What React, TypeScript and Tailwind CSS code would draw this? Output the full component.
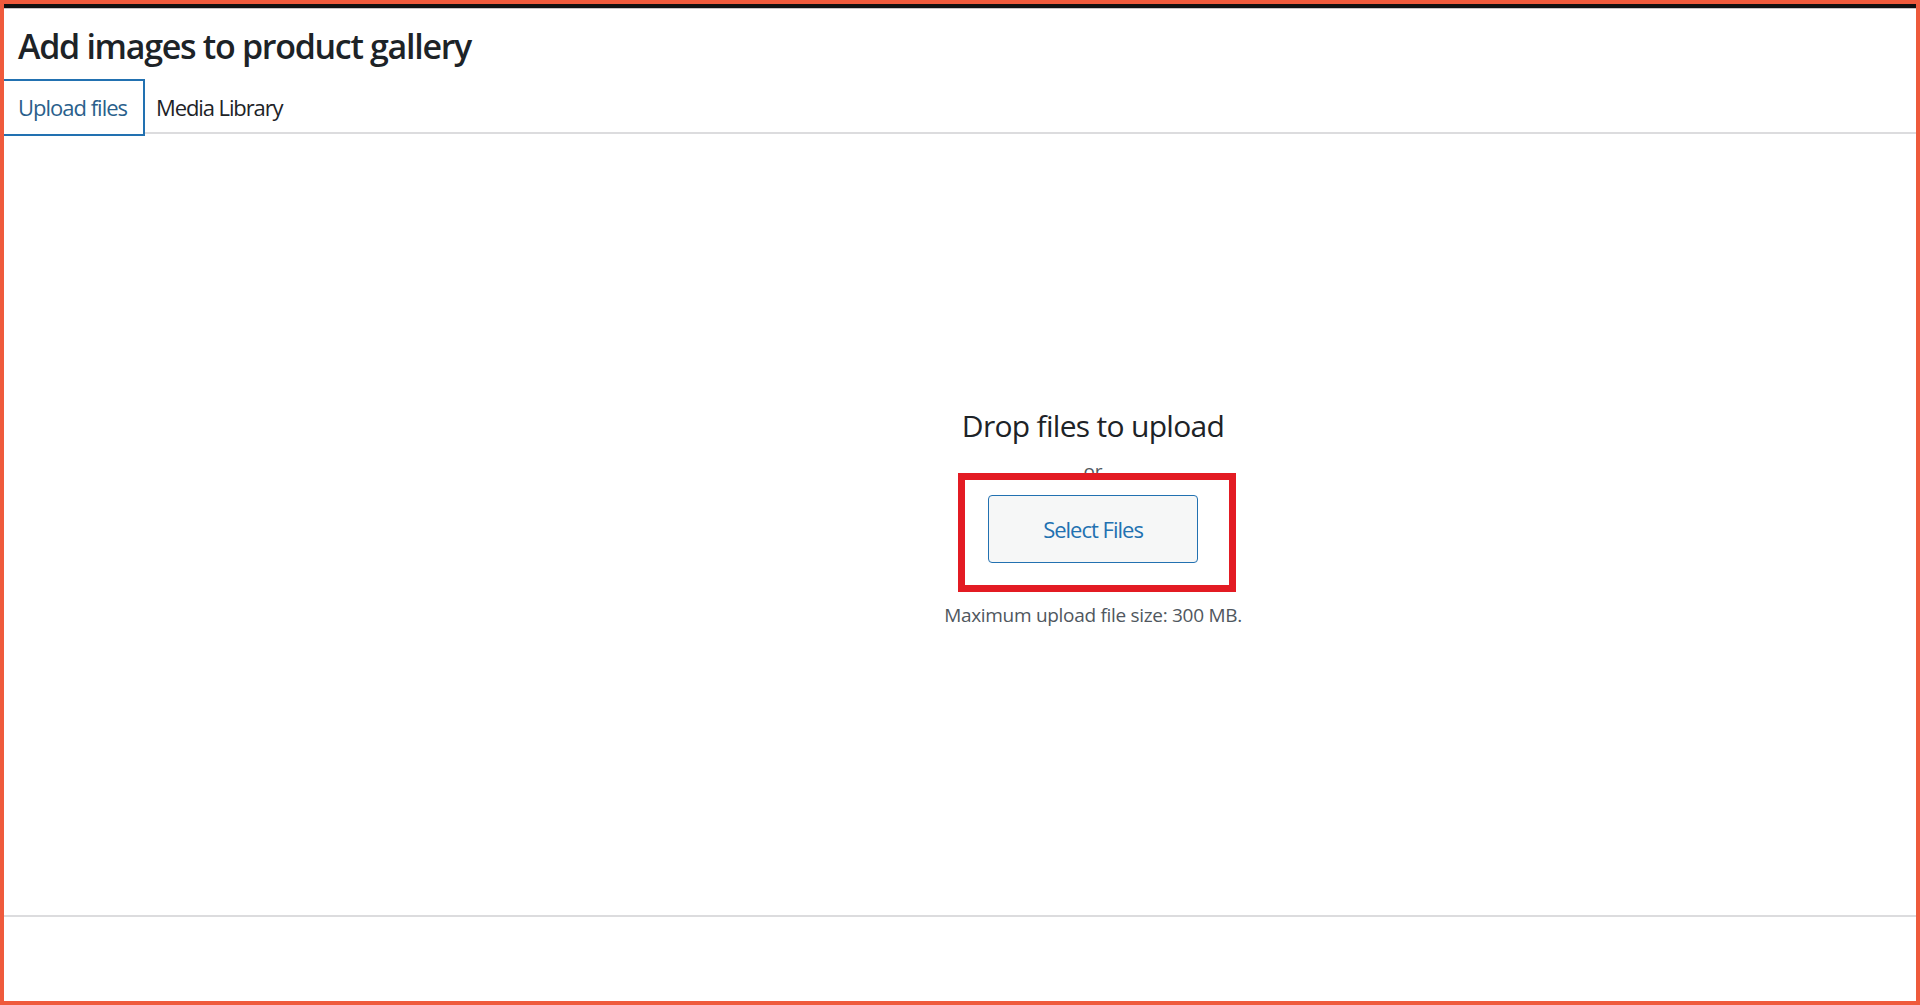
export default function App() {
  return (
    <div
      className="w-[1920px] h-[1005px] box-border border-4 border-[#ef5a3c] bg-white flex flex-col overflow-hidden"
      style={{ fontFamily: '"Open Sans", "Noto Sans", "Liberation Sans", sans-serif' }}
    >
      <div className="h-[4px] bg-[#111111] shrink-0" />
      <div className="h-px bg-[#c3c4c7] shrink-0" />
      <div className="h-[70px] shrink-0 pt-[15px] pl-[14px]">
        <h1 className="text-[34px] leading-[44px] font-semibold text-[#1d2327] tracking-[-1.3px]">
          Add images to product gallery
        </h1>
      </div>
      <div className="h-[55px] shrink-0 box-border border-b-2 border-[#dcdcde] flex items-start">
        <div className="-ml-[2px] w-[143px] h-[57px] box-border border-2 border-[#2271b1] bg-white flex items-center pl-[14px] text-[22px] text-[#2a5f8c] tracking-[-1px]">
          Upload files
        </div>
        <div className="mt-[2px] h-[53px] flex items-center pl-[11px] text-[22px] text-[#1d2327] tracking-[-1.1px]">
          Media Library
        </div>
      </div>
      <div className="flex-1 flex flex-col items-center pl-[266px] pt-[272px]">
        <div className="text-[30px] leading-[40px] text-[#1d2327] tracking-[-0.7px]">Drop files to upload</div>
        <div className="mt-[12px] text-[19px] leading-[26px] text-[#50575e]">or</div>
        <div className="relative mt-[11px]">
          <button className="w-[210px] h-[68px] box-border border border-[#2271b1] rounded-[4px] bg-[#f6f7f7] text-[22px] text-[#2271b1] tracking-[-1px]">
            Select Files
          </button>
          <div className="absolute -left-[30px] -top-[22px] -right-[38px] -bottom-[29px] border-[7px] border-[#e31b23] pointer-events-none" />
        </div>
        <div className="mt-[39px] text-[19px] leading-[26px] text-[#50575e] tracking-[-0.3px]">
          Maximum upload file size: 300 MB.
        </div>
      </div>
      <div className="h-[86px] shrink-0 box-border border-t-2 border-[#dcdcde]" />
    </div>
  );
}
